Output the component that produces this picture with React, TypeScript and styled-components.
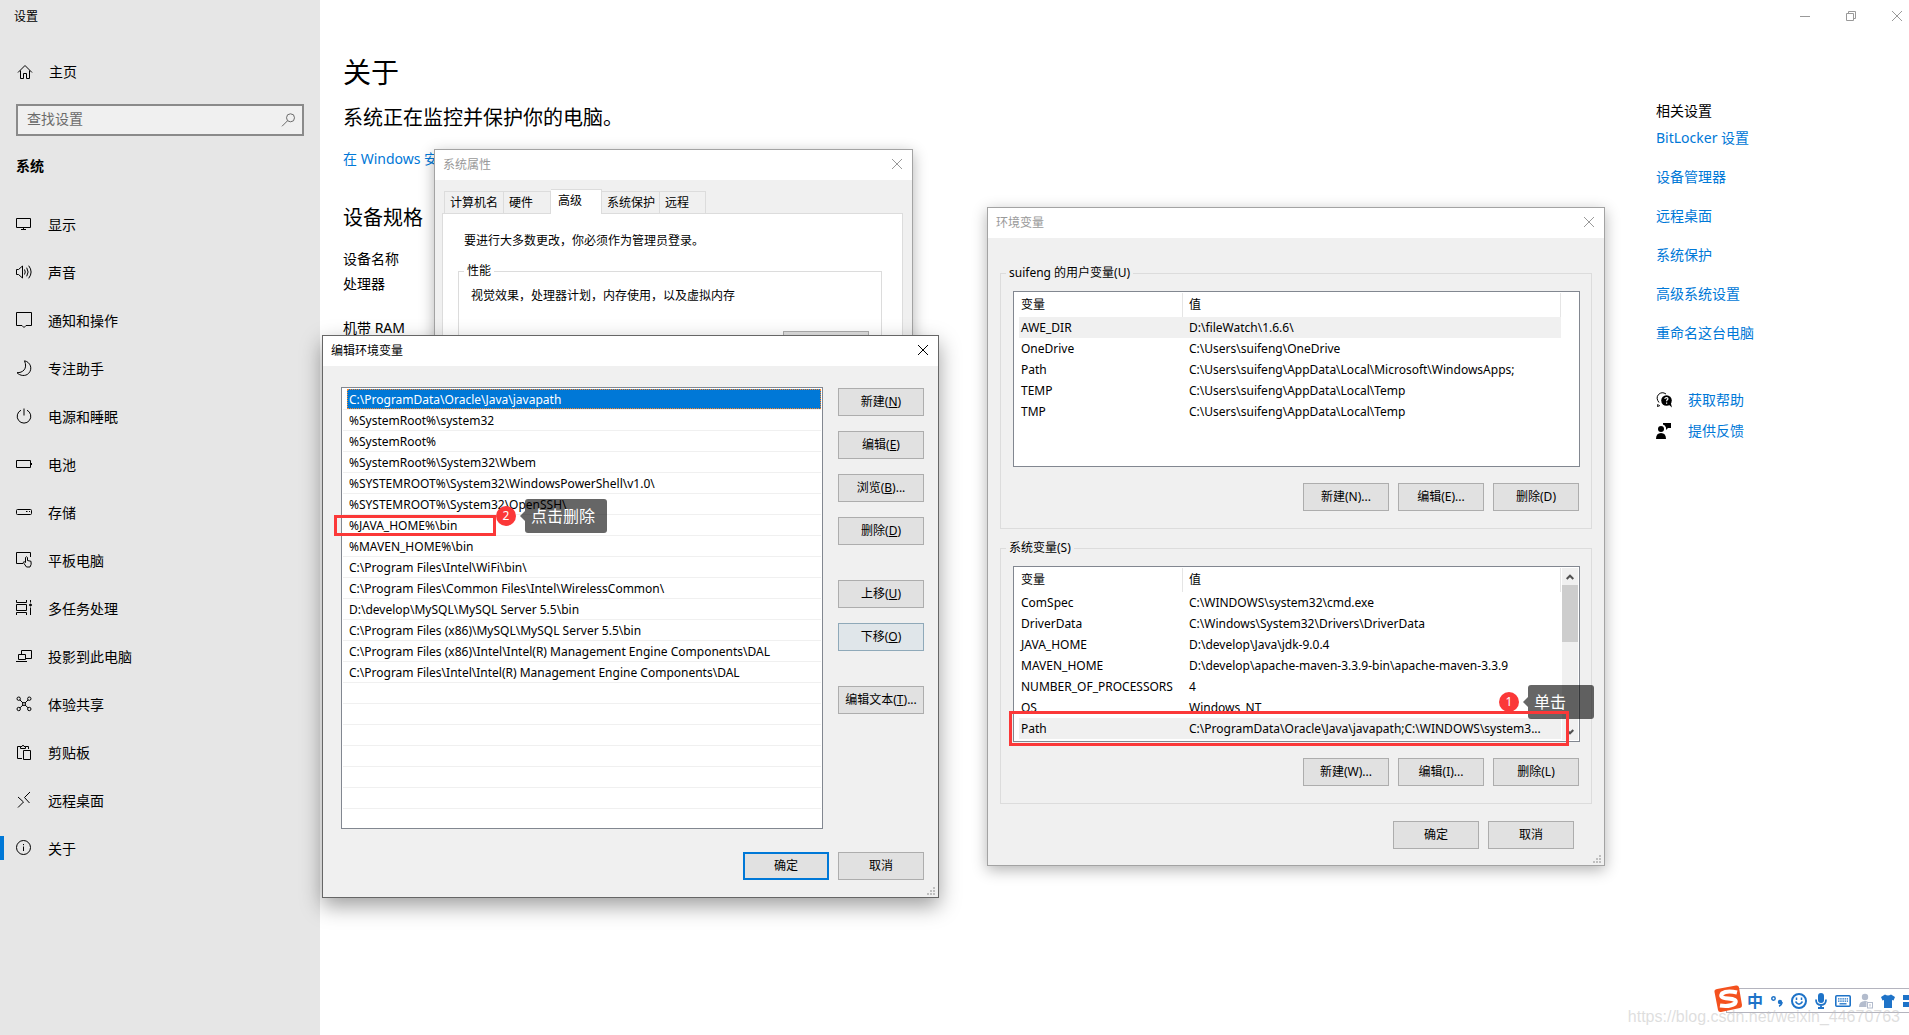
import React from "react";
import styled, { createGlobalStyle, css } from "styled-components";

const GlobalStyle = createGlobalStyle`
  *, *::before, *::after { box-sizing: border-box; }
  html, body { margin: 0; height: 100%; }
  body {
    overflow: hidden;
    background: #fff;
    color: #000;
    font: 14px/20px "Noto Sans", "Noto Sans CJK SC", sans-serif;
  }
  button, input { font: inherit; color: inherit; }
  ul, h1, h2, p, fieldset { margin: 0; padding: 0; }
  ul { list-style: none; }
  svg { display: block; flex: none; }
`;

/* ---------- settings window ---------- */

const Desktop = styled.div`
  position: relative;
  display: flex;
  min-height: 100vh;
  overflow: hidden;
`;

const Sidebar = styled.nav`
  flex: none;
  width: 320px;
  background: #e6e6e6;
`;

const WindowTitle = styled.div`
  padding: 9px 14px 7px;
  font-size: 12px;
  line-height: 16px;
`;

const HomeLink = styled.a`
  display: flex;
  align-items: center;
  gap: 16px;
  height: 48px;
  margin-top: 16px;
  padding-left: 17px;
  color: #000;
  text-decoration: none;
`;

const SearchBox = styled.label`
  display: flex;
  align-items: center;
  height: 32px;
  margin: 8px 16px 0;
  padding: 0 6px 0 9px;
  border: 2px solid #8a8a8a;
  background: #f0f0f0;
  color: #6b6b6b;
`;

const SearchInput = styled.input`
  flex: 1;
  min-width: 0;
  padding: 0 0 2px;
  border: 0;
  outline: 0;
  background: none;
  &::placeholder { color: #6b6b6b; opacity: 1; }
`;

const SectionName = styled.h2`
  margin: 20px 16px 24px;
  font-size: 14px;
  line-height: 20px;
  font-weight: 700;
`;

const NavItem = styled.a<{ $active?: boolean }>`
  position: relative;
  display: flex;
  align-items: center;
  gap: 16px;
  height: 48px;
  padding-left: 16px;
  color: #000;
  text-decoration: none;
  ${(p) =>
    p.$active &&
    css`
      &::before {
        content: "";
        position: absolute;
        left: 0;
        top: 12px;
        width: 4px;
        height: 24px;
        background: #0078d7;
      }
    `}
`;

const NavLabel = styled.span`
  padding-top: 2px;
`;

const Main = styled.main`
  flex: 1;
  min-width: 0;
`;

const Caption = styled.div`
  display: flex;
  justify-content: flex-end;
`;

const CaptionButton = styled.button<{ $edge?: boolean }>`
  display: flex;
  padding: 11px ${(p) => (p.$edge ? 7 : 18)}px 11px 18px;
  border: 0;
  background: none;
  color: #999;
`;

const Columns = styled.div`
  display: flex;
  justify-content: space-between;
  padding-left: 23px;
`;

const PageTitle = styled.h1`
  margin-top: 20px;
  font-size: 28px;
  line-height: 40px;
  font-weight: 400;
`;

const Status = styled.p`
  margin-top: 11px;
  font-size: 20px;
  line-height: 30px;
`;

const Link = styled.a`
  color: #0078d7;
  text-decoration: none;
`;

const DefenderLine = styled.p`
  margin-top: 16px;
`;

const SpecTitle = styled.h2`
  margin: 34px 0 13px;
  font-size: 20px;
  line-height: 30px;
  font-weight: 400;
`;

const SpecRow = styled.p<{ $gap?: boolean }>`
  line-height: 25px;
  margin-top: ${(p) => (p.$gap ? 19 : 0)}px;
`;

const Related = styled.aside`
  width: 253px;
  padding-top: 69px;
`;

const RelatedTitle = styled.h2`
  font-size: 14px;
  line-height: 20px;
  font-weight: 400;
`;

const RelatedList = styled.ul`
  display: flex;
  flex-direction: column;
  gap: 19px;
  margin-top: 7px;
`;

const HelpList = styled.ul`
  display: flex;
  flex-direction: column;
  gap: 11px;
  margin-top: 47px;
`;

const HelpItem = styled.li`
  display: flex;
  align-items: center;
  gap: 16px;
`;

/* ---------- classic dialogs ---------- */

const Dialog = styled.section<{ $x: number; $y: number; $w: number; $active?: boolean }>`
  position: absolute;
  left: ${(p) => p.$x}px;
  top: ${(p) => p.$y}px;
  width: ${(p) => p.$w}px;
  border: 1px solid ${(p) => (p.$active ? "#666" : "#a3a3a3")};
  background: #f0f0f0;
  box-shadow: ${(p) =>
    p.$active ? "0 8px 20px rgba(0,0,0,.38)" : "0 4px 14px rgba(0,0,0,.3)"};
  font-size: 12px;
  line-height: 18px;
`;

const TitleBar = styled.header<{ $active?: boolean }>`
  display: flex;
  align-items: center;
  justify-content: space-between;
  height: 30px;
  padding: 0 10px 0 8px;
  background: #fff;
  color: ${(p) => (p.$active ? "#000" : "#999")};
`;

const CloseButton = styled.button`
  display: flex;
  padding: 0 0 2px;
  border: 0;
  background: none;
`;

const PushButton = styled.button<{ $look?: "default" | "hot" }>`
  width: 86px;
  height: 28px;
  padding: 0;
  border: 1px solid #adadad;
  background: #e1e1e1;
  white-space: nowrap;
  ${(p) => p.$look === "default" && css`border: 2px solid #0078d7;`}
  ${(p) => p.$look === "hot" && css`border-color: #8fa9b9; background: #e0e6ea;`}
`;

const ButtonRow = styled.div<{ $top: number; $right?: number }>`
  display: flex;
  justify-content: flex-end;
  gap: 9px;
  margin: ${(p) => p.$top}px ${(p) => p.$right ?? 0}px 0 0;
`;

const Grip = styled.svg`
  position: absolute;
  right: 2px;
  bottom: 1px;
`;

const Group = styled.fieldset`
  min-width: 0;
  border: 1px solid #dcdcdc;
`;

const Legend = styled.legend`
  margin-left: -7px;
  padding: 0 3px;
`;

/* system properties */

const PropsBody = styled.div`
  padding: 9px 9px 9px 7px;
`;

const Tabs = styled.div`
  display: flex;
  align-items: flex-end;
  padding-left: 2px;
`;

const Tab = styled.button<{ $w: number; $active?: boolean }>`
  width: ${(p) => p.$w}px;
  height: 22px;
  padding: 0 0 0 5px;
  border: 1px solid #dcdcdc;
  border-width: 1px 1px 0 0;
  background: #f0f0f0;
  text-align: left;
  white-space: nowrap;
  &:first-child { border-left-width: 1px; }
  ${(p) =>
    p.$active &&
    css`
      height: 25px;
      margin-bottom: -1px;
      padding: 0 0 2px 7px;
      border-left-width: 0;
      background: #fff;
    `}
`;

const TabPanel = styled.div`
  min-height: 460px;
  padding: 18px 20px 0 15px;
  border: 1px solid #dcdcdc;
  background: #fff;
`;

const Notice = styled.p`
  margin: 0 0 12px 6px;
`;

const PerfGroup = styled(Group)`
  padding: 7px 12px 12px;
`;

/* environment variables */

const EnvBody = styled.div`
  display: flex;
  flex-direction: column;
  gap: 10px;
  padding: 26px 12px 16px;
`;

const VarGroup = styled(Group)`
  padding: 9px 11px 17px 12px;
`;

const ListFrame = styled.div`
  display: flex;
  gap: 1px;
  height: 176px;
  padding: 1px 1px 1px 5px;
  border: 1px solid #828790;
  background: #fff;
`;

const TableWrap = styled.div`
  flex: 1;
  min-width: 0;
`;

const VarTable = styled.table`
  width: 100%;
  border-collapse: separate;
  border-spacing: 0;
  table-layout: fixed;
`;

const HeadCell = styled.th<{ $w?: number }>`
  width: ${(p) => (p.$w ? `${p.$w}px` : "auto")};
  height: 24px;
  padding: 0 0 0 ${(p) => (p.$w ? 2 : 6)}px;
  border-right: 1px solid #e5e5e5;
  font-weight: 400;
  text-align: left;
`;

const VarRow = styled.tr<{ $selected?: boolean }>`
  background: ${(p) => (p.$selected ? "#f0f0f0" : "transparent")};
`;

const Cell = styled.td<{ $value?: boolean }>`
  height: 21px;
  padding: 0 0 0 ${(p) => (p.$value ? 6 : 2)}px;
  overflow: ${(p) => (p.$value ? "hidden" : "visible")};
  text-overflow: ellipsis;
  white-space: nowrap;
`;

const ScrollBar = styled.div<{ $on?: boolean }>`
  display: flex;
  flex-direction: column;
  width: 16px;
  background: ${(p) => (p.$on ? "#f0f0f0" : "transparent")};
`;

const ScrollArrow = styled.button`
  display: grid;
  place-items: center;
  height: 17px;
  padding: 0;
  border: 0;
  background: none;
  color: #505050;
`;

const ScrollTrack = styled.div`
  flex: 1;
`;

const ScrollThumb = styled.div`
  height: 57px;
  background: #cdcdcd;
`;

/* edit environment variable */

const EditBody = styled.div`
  padding: 21px 14px 17px 18px;
`;

const EditColumns = styled.div`
  display: flex;
  gap: 15px;
`;

const PathList = styled.ul`
  flex: 1;
  min-width: 0;
  height: 442px;
  padding: 1px;
  border: 1px solid #828790;
  background: repeating-linear-gradient(#fff 0 20px, #f0f0f0 20px 21px) content-box, #fff;
`;

const PathItem = styled.li<{ $selected?: boolean }>`
  height: 20px;
  margin: 0 0 1px 4px;
  padding-left: 2px;
  line-height: 22px;
  white-space: nowrap;
  ${(p) =>
    p.$selected &&
    css`
      background: #0078d7;
      color: #fff;
      outline: 1px dotted #ff8728;
      outline-offset: -1px;
    `}
`;

const ButtonColumn = styled.div`
  display: flex;
  flex-direction: column;
  gap: 35px;
  padding-top: 1px;
`;

const ButtonStack = styled.div`
  display: flex;
  flex-direction: column;
  gap: 15px;
`;

/* ---------- annotations ---------- */

const Mark = styled.div<{ $x: number; $y: number; $w: number; $h: number }>`
  position: absolute;
  left: ${(p) => p.$x}px;
  top: ${(p) => p.$y}px;
  width: ${(p) => p.$w}px;
  height: ${(p) => p.$h}px;
  border: 3px solid #fb3838;
  pointer-events: none;
`;

const Callout = styled.div<{ $x: number; $y: number }>`
  position: absolute;
  left: ${(p) => p.$x}px;
  top: ${(p) => p.$y}px;
  display: flex;
  align-items: center;
`;

const Step = styled.span`
  width: 20px;
  height: 20px;
  margin-right: 4px;
  border-radius: 50%;
  background: #fb3838;
  color: #fff;
  font-size: 12px;
  line-height: 20px;
  text-align: center;
`;

const Arrow = styled.span`
  border: solid transparent;
  border-width: 5px 5px 5px 0;
  border-right-color: rgba(0, 0, 0, 0.6);
`;

const Bubble = styled.span<{ $w: number }>`
  width: ${(p) => p.$w}px;
  padding: 5px 6px;
  border-radius: 3px;
  background: rgba(0, 0, 0, 0.6);
  color: #fff;
  font-size: 16px;
  line-height: 24px;
  white-space: nowrap;
`;

/* ---------- input method bar ---------- */

const ImeBar = styled.div`
  position: absolute;
  right: 0;
  bottom: 22px;
  display: flex;
  align-items: center;
  gap: 8px;
  width: 183px;
  height: 25px;
  padding-left: 20px;
  border: 1px solid #b4b4be;
  border-right: 0;
  background: #fff;
  color: #1e73c8;
`;

const ImeLogo = styled.svg`
  position: absolute;
  left: -14px;
  top: -5px;
`;

const ImeMode = styled.span`
  width: 16px;
  font-size: 16px;
  line-height: 22px;
  font-weight: 700;
`;

const Watermark = styled.div`
  position: absolute;
  right: 9px;
  bottom: 8px;
  color: rgba(190, 190, 190, 0.5);
  font: 16px/20px "Liberation Sans", sans-serif;
`;

/* ---------- icons ---------- */

const Icon = ({ children, size = 16 }: { children: React.ReactNode; size?: number }) => (
  <svg width={size} height={size} viewBox={`0 0 ${size} ${size}`} fill="none" stroke="currentColor" aria-hidden="true">
    {children}
  </svg>
);

const Cross = () => (
  <Icon size={10}>
    <path d="M0 0L10 10M10 0L0 10" />
  </Icon>
);

const icons = {
  home: <Icon><path d="M1 8.5L8 1.5L15 8.5M3.5 6.5V14.5H6.5V9.5H9.5V14.5H12.5V6.5" /></Icon>,
  search: <Icon><circle cx="10.500" cy="5.800" r="4" /><path d="M7.600 8.700L2 14.300" /></Icon>,
  display: <Icon><path d="M.5 2.5H14.5V11.5H.5ZM7.5 11.5V13.5M5 13.5H10" /></Icon>,
  sound: <Icon><path d="M.5 5.5H2.5L6.5 2V14L2.5 10.5H.5ZM8.5 5.5Q10 8 8.5 10.5M10.7 3.7Q13.5 8 10.7 12.3M12.7 1.7Q17.5 8 12.7 14.3" /></Icon>,
  notice: <Icon><path d="M.5 .5H15.5V13.5H10L8 15.5L6 13.5H.5Z" /></Icon>,
  focus: <Icon><path d="M8.5 .8C14.5 2 17 9 12.5 13.5C9.5 16.500 4 16 1 12.700C6.500 12.900 12 9 8.500 .8Z" /></Icon>,
  power: <Icon><path d="M5 2.200A6.800 6.800 0 1 0 11 2.200M8 .5V7.500" /></Icon>,
  battery: <Icon><path d="M.5 4.500H14.500V11.500H.5ZM15.500 7V9" /></Icon>,
  storage: <Icon><rect x=".5" y="5.500" width="15" height="5" rx="1" /><path d="M10 7.500H11.500M13 7.500H14" /></Icon>,
  tablet: <Icon><path d="M7 11.500H.5V.5H14.500V5M8 11.500L7.200 10.300Q8 9 9.500 10.500V5.500Q10.500 4 11.500 5.500V8.500L15 9.300Q15.800 12.500 14 15H10.500Z" /></Icon>,
  multitask: <Icon><path d="M.5 0V2.500H10.500V0M.5 15V12.500H10.500V15M.5 4.500H10.500V10.500H.5ZM14.500 0V2.500M14.500 7.500V15" /><circle cx="14.500" cy="5" r="1" fill="currentColor" /></Icon>,
  project: <Icon><path d="M5.500 6V2.500H15.500V10.500H10M2.500 6.500H9.500V11.500H2.500ZM0 13.500H11" /></Icon>,
  share: <Icon><circle cx="2.700" cy="2.700" r="1.700" /><circle cx="13.300" cy="2.700" r="1.700" /><circle cx="2.700" cy="13" r="1.700" /><circle cx="13.300" cy="13" r="1.700" /><circle cx="8" cy="8" r="1.500" /><path d="M4 4L7 7M12 4L9 7M4 11.800L7 9M12 11.800L9 9" /></Icon>,
  clipboard: <Icon><path d="M6 14.500H1.500V2.500H4.500M9.500 2.500H12.500V5M4.500 4.500V2.500H6Q7 -.5 8 2.500H9.500V4.500ZM7.500 6.500H14.500V15.500H7.500Z" /></Icon>,
  remote: <Icon><path d="M2 5L7.500 10L2 15.500M14 0L8.500 5.500L13.500 11" /></Icon>,
  about: <Icon><circle cx="7.500" cy="7.500" r="7" /><path d="M7.500 6.500V11M7.500 4V5.200" /></Icon>,
};

const navItems: [React.ReactNode, string][] = [
  [icons.display, "显示"],
  [icons.sound, "声音"],
  [icons.notice, "通知和操作"],
  [icons.focus, "专注助手"],
  [icons.power, "电源和睡眠"],
  [icons.battery, "电池"],
  [icons.storage, "存储"],
  [icons.tablet, "平板电脑"],
  [icons.multitask, "多任务处理"],
  [icons.project, "投影到此电脑"],
  [icons.share, "体验共享"],
  [icons.clipboard, "剪贴板"],
  [icons.remote, "远程桌面"],
  [icons.about, "关于"],
];

const relatedLinks = ["BitLocker 设置", "设备管理器", "远程桌面", "系统保护", "高级系统设置", "重命名这台电脑"];

const userVars = [
  ["AWE_DIR", "D:\\fileWatch\\1.6.6\\"],
  ["OneDrive", "C:\\Users\\suifeng\\OneDrive"],
  ["Path", "C:\\Users\\suifeng\\AppData\\Local\\Microsoft\\WindowsApps;"],
  ["TEMP", "C:\\Users\\suifeng\\AppData\\Local\\Temp"],
  ["TMP", "C:\\Users\\suifeng\\AppData\\Local\\Temp"],
];

const systemVars = [
  ["ComSpec", "C:\\WINDOWS\\system32\\cmd.exe"],
  ["DriverData", "C:\\Windows\\System32\\Drivers\\DriverData"],
  ["JAVA_HOME", "D:\\develop\\Java\\jdk-9.0.4"],
  ["MAVEN_HOME", "D:\\develop\\apache-maven-3.3.9-bin\\apache-maven-3.3.9"],
  ["NUMBER_OF_PROCESSORS", "4"],
  ["OS", "Windows_NT"],
  ["Path", "C:\\ProgramData\\Oracle\\Java\\javapath;C:\\WINDOWS\\system3..."],
];

const paths = [
  "C:\\ProgramData\\Oracle\\Java\\javapath",
  "%SystemRoot%\\system32",
  "%SystemRoot%",
  "%SystemRoot%\\System32\\Wbem",
  "%SYSTEMROOT%\\System32\\WindowsPowerShell\\v1.0\\",
  "%SYSTEMROOT%\\System32\\OpenSSH\\",
  "%JAVA_HOME%\\bin",
  "%MAVEN_HOME%\\bin",
  "C:\\Program Files\\Intel\\WiFi\\bin\\",
  "C:\\Program Files\\Common Files\\Intel\\WirelessCommon\\",
  "D:\\develop\\MySQL\\MySQL Server 5.5\\bin",
  "C:\\Program Files (x86)\\MySQL\\MySQL Server 5.5\\bin",
  "C:\\Program Files (x86)\\Intel\\Intel(R) Management Engine Components\\DAL",
  "C:\\Program Files\\Intel\\Intel(R) Management Engine Components\\DAL",
];

const SizeGrip = () => (
  <Grip width="9" height="9" viewBox="0 0 9 9" fill="#bfbfbf" aria-hidden="true">
    <path d="M6 0h2v2h-2zM3 3h2v2h-2zM6 3h2v2h-2zM0 6h2v2h-2zM3 6h2v2h-2zM6 6h2v2h-2z" />
  </Grip>
);

const Title = ({ text, active }: { text: string; active?: boolean }) => (
  <TitleBar $active={active}>
    <span>{text}</span>
    <CloseButton aria-label="关闭"><Cross /></CloseButton>
  </TitleBar>
);

const VarList = ({ rows, selected, scroll }: { rows: string[][]; selected: number; scroll?: boolean }) => (
  <ListFrame>
    <TableWrap>
      <VarTable>
        <thead>
          <tr>
            <HeadCell $w={164}>变量</HeadCell>
            <HeadCell>值</HeadCell>
          </tr>
        </thead>
        <tbody>
          {rows.map(([name, value], i) => (
            <VarRow key={name} $selected={i === selected}>
              <Cell>{name}</Cell>
              <Cell $value>{value}</Cell>
            </VarRow>
          ))}
        </tbody>
      </VarTable>
    </TableWrap>
    <ScrollBar $on={scroll}>
      {scroll && (
        <>
          <ScrollArrow aria-label="向上滚动">
            <svg width="8" height="6" viewBox="0 0 8 6" fill="none" stroke="currentColor" strokeWidth="2"><path d="M.7 5L4 1.700L7.300 5" /></svg>
          </ScrollArrow>
          <ScrollTrack><ScrollThumb /></ScrollTrack>
          <ScrollArrow aria-label="向下滚动">
            <svg width="8" height="6" viewBox="0 0 8 6" fill="none" stroke="currentColor" strokeWidth="2"><path d="M.7 1L4 4.300L7.300 1" /></svg>
          </ScrollArrow>
        </>
      )}
    </ScrollBar>
  </ListFrame>
);

const KeyButton = ({ label, k, tail = "", hot }: { label: string; k: string; tail?: string; hot?: boolean }) => (
  <PushButton $look={hot ? "hot" : undefined}>
    {label}(<u>{k}</u>){tail}
  </PushButton>
);

const SystemProperties = () => (
  <Dialog $x={434} $y={149} $w={479} aria-label="系统属性">
    <Title text="系统属性" />
    <PropsBody>
      <Tabs role="tablist">
        <Tab role="tab" $w={60}>计算机名</Tab>
        <Tab role="tab" $w={47}>硬件</Tab>
        <Tab role="tab" $w={51} $active>高级</Tab>
        <Tab role="tab" $w={58}>系统保护</Tab>
        <Tab role="tab" $w={46}>远程</Tab>
      </Tabs>
      <TabPanel>
        <Notice>要进行大多数更改，你必须作为管理员登录。</Notice>
        <PerfGroup>
          <Legend>性能</Legend>
          视觉效果，处理器计划，内存使用，以及虚拟内存
          <ButtonRow $top={26}><PushButton aria-label="设置" /></ButtonRow>
        </PerfGroup>
      </TabPanel>
    </PropsBody>
  </Dialog>
);

const EnvironmentVariables = () => (
  <Dialog $x={987} $y={207} $w={618} aria-label="环境变量">
    <Title text="环境变量" />
    <EnvBody>
      <VarGroup>
        <Legend>suifeng 的用户变量(U)</Legend>
        <VarList rows={userVars} selected={0} />
        <ButtonRow $top={16} $right={1}>
          <PushButton>新建(N)...</PushButton>
          <PushButton>编辑(E)...</PushButton>
          <PushButton>删除(D)</PushButton>
        </ButtonRow>
      </VarGroup>
      <VarGroup>
        <Legend>系统变量(S)</Legend>
        <VarList rows={systemVars} selected={6} scroll />
        <ButtonRow $top={16} $right={1}>
          <PushButton>新建(W)...</PushButton>
          <PushButton>编辑(I)...</PushButton>
          <PushButton>删除(L)</PushButton>
        </ButtonRow>
      </VarGroup>
      <ButtonRow $top={7} $right={18}>
        <PushButton>确定</PushButton>
        <PushButton>取消</PushButton>
      </ButtonRow>
    </EnvBody>
    <SizeGrip />
    <Callout $x={511} $y={477}>
      <Step>1</Step>
      <Arrow />
      <Bubble $w={66}>单击</Bubble>
    </Callout>
    <Mark $x={21} $y={503} $w={560} $h={35} />
  </Dialog>
);

const EditVariable = () => (
  <Dialog $x={322} $y={335} $w={617} $active aria-label="编辑环境变量">
    <Title text="编辑环境变量" active />
    <EditBody>
      <EditColumns>
        <PathList>
          {paths.map((p, i) => (
            <PathItem key={p} $selected={i === 0}>{p}</PathItem>
          ))}
        </PathList>
        <ButtonColumn>
          <ButtonStack>
            <KeyButton label="新建" k="N" />
            <KeyButton label="编辑" k="E" />
            <KeyButton label="浏览" k="B" tail="..." />
            <KeyButton label="删除" k="D" />
          </ButtonStack>
          <ButtonStack>
            <KeyButton label="上移" k="U" />
            <KeyButton label="下移" k="O" hot />
          </ButtonStack>
          <KeyButton label="编辑文本" k="T" tail="..." />
        </ButtonColumn>
      </EditColumns>
      <ButtonRow $top={23}>
        <PushButton $look="default">确定</PushButton>
        <PushButton>取消</PushButton>
      </ButtonRow>
    </EditBody>
    <SizeGrip />
    <Mark $x={11} $y={179} $w={162} $h={21} />
    <Callout $x={173} $y={163}>
      <Step>2</Step>
      <Arrow />
      <Bubble $w={82}>点击删除</Bubble>
    </Callout>
  </Dialog>
);

const InputMethod = () => (
  <ImeBar>
    <ImeLogo width="30" height="30" viewBox="0 0 30 30" aria-hidden="true">
      <path d="M4 5L23 1.500Q25.500 1 26 3.500L29 21Q29.300 23.500 27 24L8 28Q5.500 28.500 5 26L1.500 8Q1 5.500 4 5Z" fill="#f4511e" />
      <path d="M24 8.500Q14 6 9 9.500Q6 14 15 14.500Q25 15 22 19.500Q17 23 7 21.500" fill="none" stroke="#fff" strokeWidth="4" />
    </ImeLogo>
    <ImeMode>中</ImeMode>
    <svg width="12" height="16" viewBox="0 0 12 16" aria-hidden="true">
      <circle cx="2.500" cy="5.500" r="1.700" fill="none" stroke="currentColor" strokeWidth="1.500" />
      <circle cx="9" cy="9" r="2.200" fill="currentColor" />
      <path d="M11 9Q11 12 8 13.200" fill="none" stroke="currentColor" strokeWidth="1.500" />
    </svg>
    <Icon>
      <circle cx="8" cy="8" r="7" strokeWidth="2" />
      <path d="M4.500 8.500Q8 14 11.500 8.500" strokeWidth="1.500" />
      <path d="M5.500 4.500V7M10.500 4.500V7" strokeWidth="1.500" />
    </Icon>
    <svg width="12" height="16" viewBox="0 0 12 16" fill="none" stroke="currentColor" strokeWidth="1.800" aria-hidden="true">
      <rect x="3" y="0" width="6" height="10" rx="3" fill="currentColor" stroke="none" />
      <path d="M1 6.500Q1 12 6 12Q11 12 11 6.500M6 12V15M3 15H9" />
    </svg>
    <Icon>
      <rect x=".8" y="2.800" width="14.400" height="10.400" rx="1" strokeWidth="1.600" />
      <path d="M3 5.800H13M3 8.200H13" strokeWidth="1.300" strokeDasharray="1.500 .7" />
      <path d="M4.500 10.800H11.500" strokeWidth="1.300" />
    </Icon>
    <svg width="14" height="16" viewBox="0 0 14 16" fill="#b3bccd" aria-hidden="true">
      <circle cx="6" cy="4" r="3.200" />
      <path d="M0 14Q0 8 6 8Q8 8 9 9H7.500V14Z" />
      <rect x="8.500" y="9.500" width="5" height="5.500" fill="#fff" stroke="#b3bccd" />
      <path d="M10.500 11h1v2.500h-1z" />
    </svg>
    <svg width="14" height="16" viewBox="0 0 14 16" fill="currentColor" aria-hidden="true">
      <path d="M4 1.500Q7 3.500 10 1.500L14 4L12.500 7.500L11 7V15H3V7L1.500 7.500L0 4Z" />
    </svg>
    <svg width="7" height="16" viewBox="0 0 7 16" fill="currentColor" aria-hidden="true">
      <path d="M0 2h7v5h-7zM0 9h7v5h-7z" />
    </svg>
  </ImeBar>
);

export default function App() {
  return (
    <Desktop>
      <GlobalStyle />
      <Sidebar>
        <WindowTitle>设置</WindowTitle>
        <HomeLink href="#home">{icons.home}主页</HomeLink>
        <SearchBox>
          <SearchInput placeholder="查找设置" aria-label="查找设置" />
          {icons.search}
        </SearchBox>
        <SectionName>系统</SectionName>
        {navItems.map(([icon, label], i) => (
          <NavItem key={label} href={`#${i}`} $active={label === "关于"}>
            {icon}
            <NavLabel>{label}</NavLabel>
          </NavItem>
        ))}
      </Sidebar>
      <Main>
        <Caption>
          <CaptionButton aria-label="最小化"><Icon size={10}><path d="M0 5.500H10" /></Icon></CaptionButton>
          <CaptionButton aria-label="还原"><Icon size={10}><path d="M.5 2.500H7.500V9.500H.5ZM2.500 2.500V.5H9.500V7.500H7.500" /></Icon></CaptionButton>
          <CaptionButton aria-label="关闭" $edge><Cross /></CaptionButton>
        </Caption>
        <Columns>
          <div>
            <PageTitle>关于</PageTitle>
            <Status>系统正在监控并保护你的电脑。</Status>
            <DefenderLine><Link href="#defender">在 Windows 安</Link></DefenderLine>
            <SpecTitle>设备规格</SpecTitle>
            <SpecRow>设备名称</SpecRow>
            <SpecRow>处理器</SpecRow>
            <SpecRow $gap>机带 RAM</SpecRow>
          </div>
          <Related>
            <RelatedTitle>相关设置</RelatedTitle>
            <RelatedList>
              {relatedLinks.map((t) => (
                <li key={t}><Link href="#related">{t}</Link></li>
              ))}
            </RelatedList>
            <HelpList>
              <HelpItem>
                <Icon>
                  <path d="M2 12L1.500 14.500L4 13.500M3 10.500Q-.5 6 2.500 2.500Q6 -.8 10 2" />
                  <circle cx="10.500" cy="8.500" r="5.300" fill="currentColor" stroke="none" />
                  <path d="M12 12L16 15.500L14.500 10Z" fill="currentColor" stroke="none" />
                  <path d="M8.800 7Q9 5.500 10.500 5.500Q12.300 5.800 11.800 7.300Q10.600 8 10.600 9.300M10.600 10.500V11.700" stroke="#fff" strokeWidth="1.200" />
                </Icon>
                <Link href="#help">获取帮助</Link>
              </HelpItem>
              <HelpItem>
                <Icon>
                  <g fill="currentColor" stroke="none">
                    <circle cx="5" cy="6" r="3" />
                    <path d="M0 16Q0 10 5 10Q10 10 10 16ZM7 0H15V5H12L10 7V4.500Q9 2 7 1.500Z" />
                  </g>
                </Icon>
                <Link href="#feedback">提供反馈</Link>
              </HelpItem>
            </HelpList>
          </Related>
        </Columns>
      </Main>
      <SystemProperties />
      <EnvironmentVariables />
      <EditVariable />
      <InputMethod />
      <Watermark>https://blog.csdn.net/weixin_44670763</Watermark>
    </Desktop>
  );
}
